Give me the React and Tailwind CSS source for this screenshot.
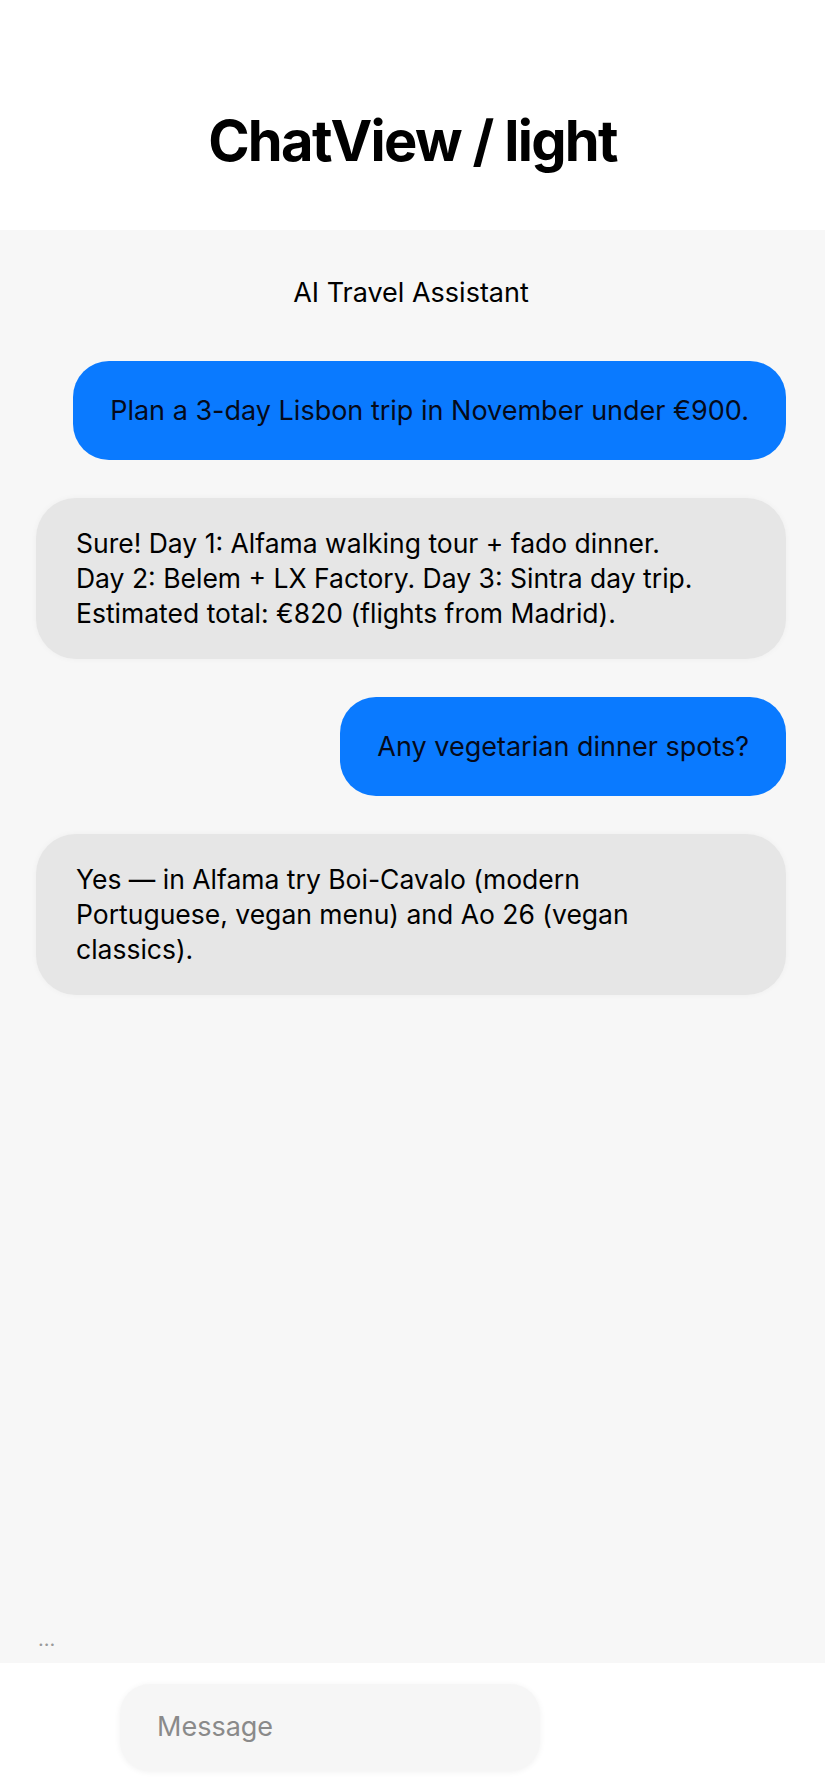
import React from 'react'

// Mensagens fixas da conversa (quebras de linha iguais à referência).
const MESSAGES = [
  { id: 1, from: 'user', lines: ['Plan a 3-day Lisbon trip in November under €900.'] },
  {
    id: 2,
    from: 'bot',
    lines: [
      'Sure! Day 1: Alfama walking tour + fado dinner.',
      'Day 2: Belem + LX Factory. Day 3: Sintra day trip.',
      'Estimated total: €820 (flights from Madrid).',
    ],
  },
  { id: 3, from: 'user', lines: ['Any vegetarian dinner spots?'] },
  {
    id: 4,
    from: 'bot',
    lines: [
      'Yes — in Alfama try Boi-Cavalo (modern',
      'Portuguese, vegan menu) and Ao 26 (vegan',
      'classics).',
    ],
  },
]

function Bubble({ msg }) {
  if (msg.from === 'user') {
    return (
      <div className="flex justify-end">
        <div className="rounded-[36px] bg-[#0a7aff] px-[37px] py-8 text-[27px] leading-[35px] text-[#050a1a]">
          {msg.lines.map((l) => (
            <div key={l}>{l}</div>
          ))}
        </div>
      </div>
    )
  }
  return (
    <div className="w-full rounded-[40px] bg-[#e6e6e6] px-10 py-7 text-[26.5px] leading-[35px] text-black shadow-[0_0_6px_rgba(0,0,0,0.04)]">
      {msg.lines.map((l) => (
        <div key={l}>{l}</div>
      ))}
    </div>
  )
}

export default function App() {
  return (
    <div
      className="flex h-[1789px] w-full flex-col bg-white"
      style={{ fontFamily: 'Inter, "Liberation Sans", sans-serif' }}
    >
      {/* Cabeçalho */}
      <header className="flex h-[230px] shrink-0 items-center justify-center pt-[52px]">
        <h1 className="text-[56px] font-bold tracking-[-0.03em] text-black">ChatView / light</h1>
      </header>

      {/* Área do chat */}
      <main className="flex flex-1 flex-col bg-[#f7f7f7] pl-9 pr-[39px] pt-[47px]">
        <p className="text-center text-[27px] leading-8 text-black">AI Travel Assistant</p>

        <div className="mt-[52px] flex flex-col gap-[38px]">
          {MESSAGES.map((m) => (
            <Bubble key={m.id} msg={m} />
          ))}
        </div>

        <div className="mt-auto pb-[16px] pl-[2px] text-[20px] leading-4 text-[#9a9a9a]">...</div>
      </main>

      {/* Campo de mensagem */}
      <footer className="h-[126px] shrink-0 bg-white pl-[120px] pt-[21px]">
        <div className="flex h-[87px] w-[420px] items-center rounded-[30px] bg-[#f6f6f6] px-[37px] shadow-[0_1px_6px_rgba(0,0,0,0.06)]">
          <span className="text-[27px] text-[#8a8a8a]">Message</span>
        </div>
      </footer>
    </div>
  )
}
